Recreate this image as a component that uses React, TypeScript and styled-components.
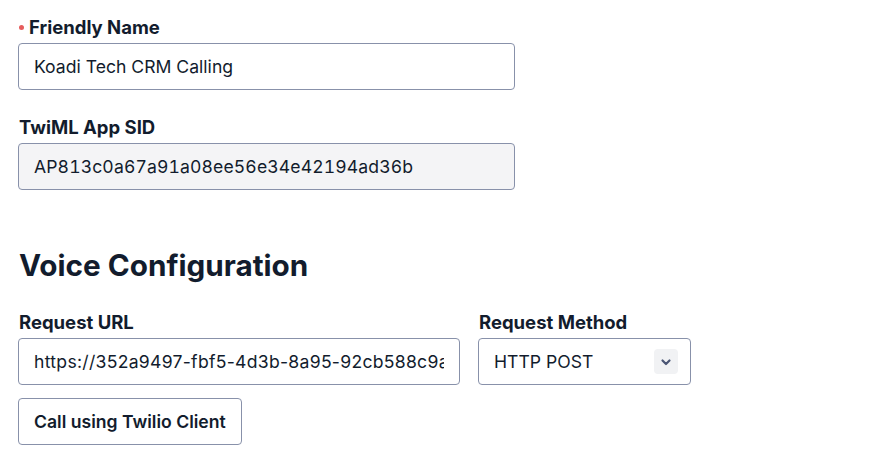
import React from 'react';
import styled, { createGlobalStyle } from 'styled-components';

const GlobalStyle = createGlobalStyle`
  html, body {
    margin: 0;
    padding: 0;
    background: #ffffff;
  }
  body {
    font-family: Inter, "Noto Sans", sans-serif;
    color: #121c2d;
    -webkit-font-smoothing: antialiased;
  }
`;

const Page = styled.div`
  padding: 15px 0 0 18px;
  width: 674px;
`;

const Field = styled.div<{ $width?: number }>`
  display: flex;
  flex-direction: column;
  gap: 4px;
  width: ${p => (p.$width ? `${p.$width}px` : '100%')};
`;

const Label = styled.label`
  display: flex;
  align-items: center;
  font-size: 18.5px;
  font-weight: 700;
  line-height: 24px;
  color: #121c2d;
  padding-left: 1px;
`;

const RequiredDot = styled.span`
  width: 5px;
  height: 5px;
  border-radius: 50%;
  background: #e65c5c;
  margin: 0 5px 0 0;
`;

type Variant = 'text' | 'sid' | 'url';

const Input = styled.input<{ $readOnly?: boolean; $variant?: Variant }>`
  box-sizing: border-box;
  width: 100%;
  height: 47px;
  padding: 0 15px;
  border: 1px solid #8891aa;
  border-radius: 4px;
  background: ${p => (p.$readOnly ? '#f4f4f6' : '#ffffff')};
  font-family: Inter, "Noto Sans", sans-serif;
  font-size: 17.6px;
  font-variant-numeric: ${p => (p.$variant === 'sid' ? 'tabular-nums' : 'normal')};
  letter-spacing: ${p => (p.$variant === 'sid' ? '0.12px' : p.$variant === 'url' ? '0.28px' : 'normal')};
  color: #121c2d;
  outline: none;
`;

const Stack = styled.div`
  display: flex;
  flex-direction: column;
  gap: 25px;
`;

const Heading = styled.h2`
  margin: 55px 0 25px 1px;
  font-size: 29.7px;
  font-weight: 700;
  line-height: 40px;
  color: #121c2d;
`;

const Row = styled.div`
  display: flex;
  gap: 18px;
  align-items: flex-end;
`;

const SelectBox = styled.div`
  box-sizing: border-box;
  display: flex;
  align-items: center;
  justify-content: space-between;
  height: 47px;
  padding: 0 12px 0 15px;
  border: 1px solid #8891aa;
  border-radius: 4px;
  background: #ffffff;
  font-size: 17.6px;
  color: #121c2d;
`;

const ChevronWrap = styled.span`
  display: flex;
  align-items: center;
  justify-content: center;
  width: 24px;
  height: 25px;
  border-radius: 4px;
  background: #f1f2f4;
  color: #4b5675;
`;

const Button = styled.button`
  box-sizing: border-box;
  margin-top: 13px;
  height: 47px;
  padding: 0 15px;
  border: 1px solid #8891aa;
  border-radius: 4px;
  background: #ffffff;
  font-family: Inter, "Noto Sans", sans-serif;
  font-size: 17.6px;
  font-weight: 600;
  color: #121c2d;
  align-self: flex-start;
`;

const Section = styled.div`
  display: flex;
  flex-direction: column;
`;

const App: React.FC = () => (
  <>
    <GlobalStyle />
    <Page>
      <Stack>
        <Field $width={497}>
          <Label>
            <RequiredDot />
            Friendly Name
          </Label>
          <Input defaultValue="Koadi Tech CRM Calling" />
        </Field>
        <Field $width={497}>
          <Label>TwiML App SID</Label>
          <Input $readOnly $variant="sid" readOnly defaultValue="AP813c0a67a91a08ee56e34e42194ad36b" />
        </Field>
      </Stack>
      <Heading>Voice Configuration</Heading>
      <Section>
        <Row>
          <Field $width={442}>
            <Label>Request URL</Label>
            <Input $variant="url" defaultValue="https://352a9497-fbf5-4d3b-8a95-92cb588c9a1f.twil.io/voice" />
          </Field>
          <Field $width={213}>
            <Label>Request Method</Label>
            <SelectBox>
              <span>HTTP POST</span>
              <ChevronWrap>
                <svg width="12" height="12" viewBox="0 0 12 12" fill="none">
                  <path d="M2.5 4.5 6 8 9.5 4.5" stroke="currentColor" strokeWidth="2.2" strokeLinecap="round" strokeLinejoin="round" />
                </svg>
              </ChevronWrap>
            </SelectBox>
          </Field>
        </Row>
        <Button>Call using Twilio Client</Button>
      </Section>
    </Page>
  </>
);

export default App;
